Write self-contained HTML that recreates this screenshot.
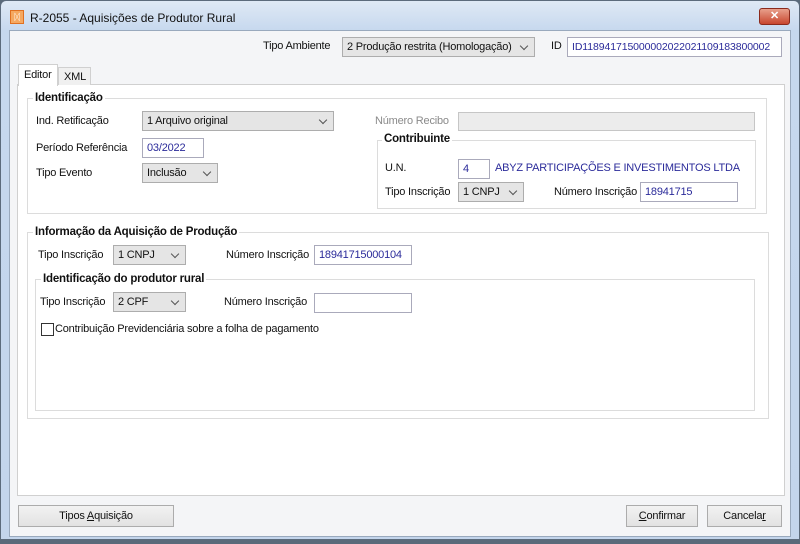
<!DOCTYPE html>
<html><head><meta charset="utf-8"><style>
*{box-sizing:border-box;margin:0;padding:0}
body{width:800px;height:544px;overflow:hidden;background:#5a6a7a;font-family:"Liberation Sans",sans-serif;font-size:11px;letter-spacing:-0.2px;color:#111;position:relative}
.a{position:absolute;white-space:nowrap}
.win{left:0;top:0;width:800px;height:540px;background:linear-gradient(#dfe9f5,#c6d8ee 30px,#c3d5ec);border:1px solid #5c6b7c;border-radius:6px 6px 0 0}
.client{left:9px;top:30px;width:782px;height:507px;background:#f4f5f7;border:1px solid #99a9bd}
.sel{background:#e5e5e5;border:1px solid #adadad;padding:3px 0 0 4px;height:20px}
.sel:after{content:"";position:absolute;right:7px;top:5px;width:5px;height:5px;border-right:1px solid #555;border-bottom:1px solid #555;transform:rotate(45deg)}
.inp{background:#fff;border:1px solid #aab;padding:3px 0 0 4px;height:20px;color:#2b2b9a}
.grp{border:1px solid #dcdcdc}
.gt{font-weight:bold;background:#fff;padding:0 2px;font-size:11.5px}
.btn{background:linear-gradient(#f2f2f2,#e2e2e2);border:1px solid #acacac;text-align:center;padding-top:4px;height:22px}
</style></head><body>
<div class="a win"></div>
<div class="a" style="left:10px;top:10px;width:14px;height:14px;background:#f5a860;border:1px solid #e07020;color:#fff;font-size:9px;text-align:center;line-height:12px">ᛞ</div>
<div class="a" style="left:30px;top:11px;font-size:12px;letter-spacing:0">R-2055 - Aquisições de Produtor Rural</div>
<div class="a" style="left:759px;top:8px;width:31px;height:17px;background:linear-gradient(#e8a08c,#c8462e);border:1px solid #8b2a1c;border-radius:3px;color:#fff;font-weight:bold;text-align:center;font-size:11px;line-height:15px">✕</div>
<div class="a client"></div>
<div class="a" style="left:263px;top:40px">Tipo Ambiente</div>
<div class="a sel" style="left:342px;top:37px;width:193px">2 Produção restrita (Homologação)</div>
<div class="a" style="left:551px;top:40px">ID</div>
<div class="a inp" style="left:567px;top:37px;width:215px;font-size:10.5px;letter-spacing:-0.1px;overflow:hidden">ID11894171500000202202110918380000​2</div>
<div class="a" style="left:17px;top:84px;width:768px;height:412px;background:#fff;border:1px solid #d0d0d0"></div>
<div class="a" style="left:18px;top:64px;width:40px;height:22px;background:#fff;border:1px solid #d0d0d0;border-bottom:none;padding:4px 0 0 5px">Editor</div>
<div class="a" style="left:58px;top:67px;width:33px;height:18px;background:#f0f0f0;border:1px solid #d0d0d0;border-bottom:none;padding:3px 0 0 5px">XML</div>
<div class="a grp" style="left:27px;top:98px;width:740px;height:116px"></div>
<div class="a gt" style="left:33px;top:92px">Identificação</div>
<div class="a" style="left:36px;top:115px">Ind. Retificação</div>
<div class="a sel" style="left:142px;top:111px;width:192px">1 Arquivo original</div>
<div class="a" style="left:36px;top:142px">Período Referência</div>
<div class="a inp" style="left:142px;top:138px;width:62px">03/2022</div>
<div class="a" style="left:36px;top:167px">Tipo Evento</div>
<div class="a sel" style="left:142px;top:163px;width:76px">Inclusão</div>
<div class="a" style="left:375px;top:115px;color:#8a8a8a">Número Recibo</div>
<div class="a" style="left:458px;top:112px;width:297px;height:19px;background:#ececec;border:1px solid #c6c6c6"></div>
<div class="a grp" style="left:377px;top:140px;width:379px;height:69px"></div>
<div class="a gt" style="left:382px;top:133px">Contribuinte</div>
<div class="a" style="left:385px;top:162px">U.N.</div>
<div class="a inp" style="left:458px;top:159px;width:32px">4</div>
<div class="a" style="left:495px;top:162px;color:#2b2b9a">ABYZ PARTICIPAÇÕES E INVESTIMENTOS LTDA</div>
<div class="a" style="left:385px;top:186px">Tipo Inscrição</div>
<div class="a sel" style="left:458px;top:182px;width:66px">1 CNPJ</div>
<div class="a" style="left:554px;top:186px">Número Inscrição</div>
<div class="a inp" style="left:640px;top:182px;width:98px">18941715</div>
<div class="a grp" style="left:27px;top:232px;width:742px;height:187px"></div>
<div class="a gt" style="left:33px;top:226px">Informação da Aquisição de Produção</div>
<div class="a" style="left:38px;top:249px">Tipo Inscrição</div>
<div class="a sel" style="left:113px;top:245px;width:73px">1 CNPJ</div>
<div class="a" style="left:226px;top:249px">Número Inscrição</div>
<div class="a inp" style="left:314px;top:245px;width:98px">18941715000104</div>
<div class="a grp" style="left:35px;top:279px;width:720px;height:132px"></div>
<div class="a gt" style="left:41px;top:273px">Identificação do produtor rural</div>
<div class="a" style="left:40px;top:296px">Tipo Inscrição</div>
<div class="a sel" style="left:113px;top:292px;width:73px">2 CPF</div>
<div class="a" style="left:224px;top:296px">Número Inscrição</div>
<div class="a inp" style="left:314px;top:293px;width:98px"></div>
<div class="a" style="left:41px;top:323px;width:13px;height:13px;border:1px solid #333;background:#fff"></div>
<div class="a" style="left:55px;top:323px">Contribuição Previdenciária sobre a folha de pagamento</div>
<div class="a btn" style="left:18px;top:505px;width:156px">Tipos <u>A</u>quisição</div>
<div class="a btn" style="left:626px;top:505px;width:72px"><u>C</u>onfirmar</div>
<div class="a btn" style="left:707px;top:505px;width:75px">Cancela<u>r</u></div>
</body></html>
